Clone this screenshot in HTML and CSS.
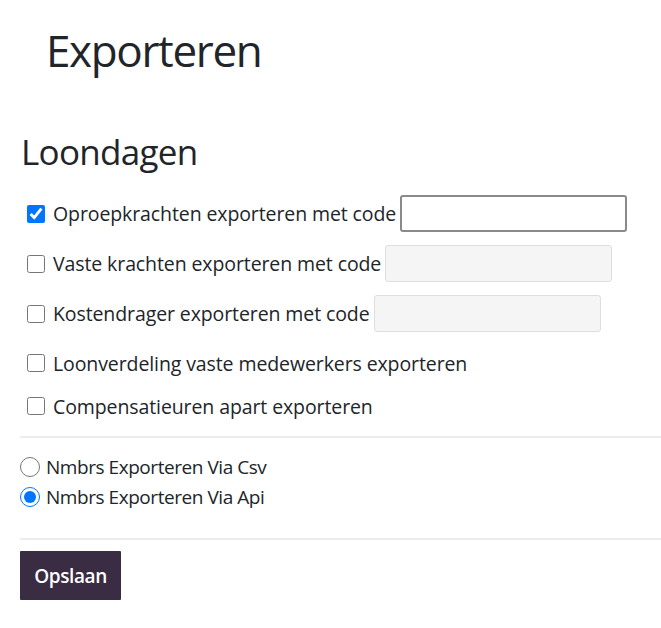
FILE: index.html
```html
<!DOCTYPE html>
<html lang="nl">
<head>
<meta charset="utf-8">
<title>Exporteren</title>
<link rel="stylesheet" href="styles.css">
</head>
<body>
<div class="page">
  <h1 class="title">Exporteren</h1>
  <section class="content">
    <h2 class="section-title">Loondagen</h2>
    <div class="options">
      <div class="row">
        <label class="check"><input type="checkbox" checked><span>Oproepkrachten exporteren met code</span></label>
        <input type="text" class="code">
      </div>
      <div class="row">
        <label class="check"><input type="checkbox"><span>Vaste krachten exporteren met code</span></label>
        <input type="text" class="code" disabled>
      </div>
      <div class="row">
        <label class="check"><input type="checkbox"><span>Kostendrager exporteren met code</span></label>
        <input type="text" class="code" disabled>
      </div>
      <div class="row plain first-plain">
        <label class="check"><input type="checkbox"><span>Loonverdeling vaste medewerkers exporteren</span></label>
      </div>
      <div class="row plain">
        <label class="check"><input type="checkbox"><span>Compensatieuren apart exporteren</span></label>
      </div>
    </div>
    <hr class="divider divider-first">
    <div class="radios">
      <label class="radio"><input type="radio" name="mode"><span>Nmbrs Exporteren Via Csv</span></label>
      <label class="radio"><input type="radio" name="mode" checked><span>Nmbrs Exporteren Via Api</span></label>
    </div>
    <hr class="divider divider-second">
    <div class="actions">
      <button type="button" class="btn">Opslaan</button>
    </div>
  </section>
</div>
</body>
</html>
```
FILE: styles.css
```css
html, body {
  margin: 0;
  padding: 0;
  background: #ffffff;
}

body {
  font-family: "Open Sans", "Noto Sans", sans-serif;
  color: #212529;
  font-size: 19.5px;
}

.page {
  display: flex;
  flex-direction: column;
}

.title {
  margin: 22px 0 0 46px;
  font-size: 44px;
  font-weight: 400;
  line-height: 56px;
  letter-spacing: -1.35px;
}

.content {
  display: flex;
  flex-direction: column;
  padding-left: 20px;
  margin-top: 52px;
}

.section-title {
  margin: 0 0 0 1px;
  font-size: 35px;
  font-weight: 400;
  line-height: 44px;
  letter-spacing: -0.7px;
}

.options {
  display: flex;
  flex-direction: column;
  gap: 13px;
  margin-top: 21px;
  padding-left: 7px;
}

.row {
  display: flex;
  align-items: center;
  height: 37px;
  gap: 4px;
}

.row.plain {
  height: 30px;
}

.row.first-plain {
  margin-top: 3px;
}

.check, .radio {
  display: flex;
  align-items: center;
  white-space: nowrap;
}

.check {
  letter-spacing: -0.1px;
}

.radio {
  font-size: 19px;
  letter-spacing: -0.45px;
}

.check input {
  width: 18px;
  height: 18px;
  margin: 0 8px 0 0;
}

.code {
  width: 227px;
  height: 37px;
  box-sizing: border-box;
  border: 2px solid #8a8a8a;
  border-radius: 3px;
  background: #ffffff;
  padding: 0 8px;
  font: inherit;
}

.code:disabled {
  border: 1px solid #dedede;
  background: #f5f5f5;
}

.divider {
  border: 0;
  border-top: 2px solid #ececec;
  margin: 0;
}

.divider-first {
  margin-top: 15px;
}

.radios {
  display: flex;
  flex-direction: column;
  margin-top: 14px;
}

.radio {
  height: 30px;
}

.radio input {
  width: 20px;
  height: 20px;
  margin: 0 6px 0 0;
}

.divider-second {
  margin-top: 26px;
}

.actions {
  display: flex;
  margin-top: 11px;
}

.btn {
  height: 49px;
  width: 101px;
  border: 0;
  border-radius: 1px;
  background: #3a2c42;
  color: #ffffff;
  font-family: "Open Sans", "Noto Sans", sans-serif;
  font-size: 19px;
  font-weight: 600;
  letter-spacing: -0.4px;
  padding: 0;
}
```
